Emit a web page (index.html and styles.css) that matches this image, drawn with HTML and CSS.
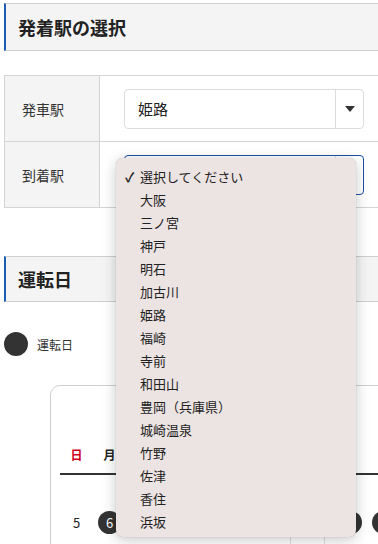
FILE: index.html
```html
<!DOCTYPE html>
<html lang="ja">
<head>
	<title>発着駅の選択</title>
	<meta charset="utf-8">
	<link rel="stylesheet" href="styles.css">
</head>
<body>
	<div id="wrapper">
		<h2 class="section-title">発着駅の選択</h2>

		<table class="form-table">
			<tr>
				<th>発車駅</th>
				<td>
					<div class="select">
						<span class="select-value">姫路</span>
						<span class="select-arrow"></span>
					</div>
				</td>
			</tr>
			<tr>
				<th>到着駅</th>
				<td>
					<div class="select focused">
						<span class="select-value"></span>
						<span class="select-arrow"></span>
						<ul class="dropdown">
							<li class="checked"><span class="check">✓</span>選択してください</li>
							<li>大阪</li>
							<li>三ノ宮</li>
							<li>神戸</li>
							<li>明石</li>
							<li>加古川</li>
							<li>姫路</li>
							<li>福崎</li>
							<li>寺前</li>
							<li>和田山</li>
							<li>豊岡（兵庫県）</li>
							<li>城崎温泉</li>
							<li>竹野</li>
							<li>佐津</li>
							<li>香住</li>
							<li>浜坂</li>
						</ul>
					</div>
				</td>
			</tr>
		</table>

		<h2 class="section-title second">運転日</h2>

		<div class="legend">
			<span class="dot"></span>
			<span>運転日</span>
		</div>

		<div class="calendar">
			<div class="cal-head">
				<span class="sun">日</span>
				<span>月</span>
				<span>火</span>
				<span>水</span>
				<span>木</span>
				<span>金</span>
				<span>土</span>
			</div>
			<div class="cal-row">
				<span>5</span>
				<span class="run">6</span>
				<span></span>
				<span></span>
				<span></span>
				<span></span>
				<span></span>
				<span class="wide"></span>
				<span class="run"></span>
				<span class="run"></span>
			</div>
			<div class="cal-lines">
				<span class="cell"></span>
			</div>
		</div>
	</div>
</body>
</html>
```

FILE: styles.css
```css
body {
	margin: 0;
	padding: 0;
	overflow: hidden;
	background: white;
	color: #222;
	font-family: "Noto Sans CJK JP", "Noto Sans", sans-serif;
}

#wrapper {
	width: 420px;
	padding: 3px 0 0 4px;
}

.section-title {
	margin: 0;
	height: 46px;
	line-height: 46px;
	padding-left: 12px;
	background: #f4f4f4;
	border-top: 1px solid #cfcfcf;
	border-bottom: 1px solid #cfcfcf;
	border-left: 2px solid #1a5fb4;
	font-size: 18px;
	font-weight: bold;
	color: #222;
}

.section-title.second {
	margin-top: 48px;
	height: 44px;
	line-height: 44px;
}

.form-table {
	margin-top: 24px;
	width: 100%;
	border-collapse: collapse;
}

.form-table th,
.form-table td {
	border: 1px solid #d4d4d4;
	height: 65px;
	padding: 0;
}

.form-table th {
	width: 95px;
	background: #f4f4f4;
	text-align: left;
	padding-left: 17px;
	box-sizing: border-box;
	font-size: 14px;
	font-weight: normal;
	color: #333;
}

.form-table td {
	padding-left: 24px;
}

.select {
	position: relative;
	width: 240px;
	height: 40px;
	box-sizing: border-box;
	border: 1px solid #dcdcdc;
	border-radius: 4px;
	display: flex;
	align-items: center;
	background: white;
}

.select.focused {
	border-color: #1b4fa8;
}

.select-value {
	flex: 1;
	padding-left: 13px;
	font-size: 15px;
	color: #222;
}

.select-arrow {
	width: 27px;
	height: 100%;
	border-left: 1px solid #dcdcdc;
	display: flex;
	align-items: center;
	justify-content: center;
}

.select-arrow::after {
	content: "";
	border-left: 5px solid transparent;
	border-right: 5px solid transparent;
	border-top: 6px solid #333;
}

.dropdown {
	position: absolute;
	left: -9px;
	top: 2px;
	width: 240px;
	margin: 0;
	padding: 7px 0 4px;
	list-style: none;
	background: #ece4e2;
	border-radius: 7px;
	box-shadow: 0 3px 14px rgba(0, 0, 0, 0.22), 0 0 1px rgba(0, 0, 0, 0.3);
	z-index: 10;
}

.dropdown li {
	height: 23px;
	line-height: 23px;
	padding-left: 24px;
	font-size: 13px;
	color: #222;
	position: relative;
}

.dropdown .check {
	position: absolute;
	left: 9px;
	font-size: 13px;
	font-weight: bold;
}

.legend {
	margin-top: 30px;
	display: flex;
	align-items: center;
	gap: 9px;
	font-size: 12px;
	color: #333;
}

.dot {
	width: 24px;
	height: 24px;
	border-radius: 50%;
	background: #333;
}

.calendar {
	margin: 29px 0 0 46px;
	height: 200px;
	border: 1px solid #cfcfcf;
	border-radius: 10px;
	padding: 60px 0 0 9px;
	box-sizing: border-box;
}

.cal-head,
.cal-row {
	display: flex;
}

.cal-head {
	border-bottom: 2px solid #333;
	height: 27px;
	align-items: flex-start;
}

.cal-head span,
.cal-row span {
	width: 33px;
	flex: none;
	text-align: center;
	font-size: 12px;
	font-weight: bold;
	color: #222;
}

.cal-head .sun {
	color: #d0021b;
}

.cal-row {
	height: 62px;
	align-items: center;
	padding-top: 33px;
	box-sizing: border-box;
}

.cal-row span {
	font-weight: normal;
	font-size: 13px;
	height: 23px;
	line-height: 23px;
}

.cal-row span.wide {
	width: 43px;
}

.cal-row .run {
	width: 23px;
	margin: 0 5px;
	border-radius: 50%;
	background: #333;
	color: white;
}

.cal-lines {
	height: 20px;
	padding-left: 230px;
}

.cal-lines .cell {
	display: block;
	width: 33px;
	height: 100%;
	border-left: 1px solid #ddd;
	border-right: 1px solid #ddd;
}
```
